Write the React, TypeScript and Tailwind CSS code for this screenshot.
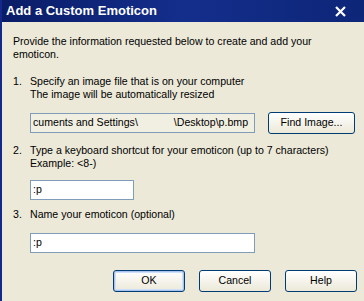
import React from "react";

function XpButton({ label, primary = false, wide = false }: { label: string; primary?: boolean; wide?: boolean }) {
  return (
    <div
      className={`flex h-[22px] items-center justify-center rounded-[3px] border border-[#003c74] bg-gradient-to-b from-[#ffffff] to-[#ece9d8] text-black ${
        wide ? "w-[87px]" : "w-[72px]"
      } ${primary ? "shadow-[inset_0_0_0_1px_#a8c4ee,inset_0_0_0_2px_#cfe0fa]" : ""}`}
    >
      {label}
    </div>
  );
}

function Step({ num, children }: { num: string; children: React.ReactNode }) {
  return (
    <div className="flex leading-[13px]">
      <span className="w-[17px] shrink-0">{num}</span>
      <div>{children}</div>
    </div>
  );
}

export default function App() {
  return (
    <div
      className="flex h-[301px] w-[364px] flex-col overflow-hidden border-l-2 border-[#13288a] bg-[#ece9d8] text-[10.6px] text-black"
      style={{ fontFamily: '"Liberation Sans", Arial, sans-serif' }}
    >
      {/* title bar */}
      <div className="-ml-[2px] flex h-[22px] shrink-0 items-center justify-between bg-gradient-to-r from-[#0a1c66] via-[#142e8c] to-[#0d2678] pl-[6px] pr-[18px]">
        <span className="text-[13px] font-bold text-white">Add a Custom Emoticon</span>
        <svg width="11" height="11" viewBox="0 0 11 11">
          <path d="M1 1 L10 10 M10 1 L1 10" stroke="#ffffff" strokeWidth="2.2" />
        </svg>
      </div>

      <div className="flex flex-col pl-[11px] pr-[7px] pt-[13px]">
        <p className="leading-[13px]">
          Provide the information requested below to create and add your
          <br />
          emoticon.
        </p>

        <div className="mt-[14px]">
          <Step num="1.">
            Specify an image file that is on your computer
            <br />
            The image will be automatically resized
          </Step>
        </div>

        <div className="ml-[17px] mt-[11px] flex items-center gap-[13px]">
          <div className="flex h-[20px] w-[225px] items-center overflow-hidden whitespace-nowrap border border-[#7f9db9] bg-[#f1efe2] pl-[2px]">
            <span>cuments and Settings\</span>
            <span className="w-[36px] shrink-0" />
            <span>\Desktop\p.bmp</span>
          </div>
          <XpButton label="Find Image..." wide />
        </div>

        <div className="mt-[10px]">
          <Step num="2.">
            Type a keyboard shortcut for your emoticon (up to 7 characters)
            <br />
            Example: &lt;8-)
          </Step>
        </div>

        <div className="ml-[17px] mt-[10px] flex h-[20px] w-[104px] items-center border border-[#7f9db9] bg-white pl-[2px]">
          :p
        </div>

        <div className="mt-[8px]">
          <Step num="3.">Name your emoticon (optional)</Step>
        </div>

        <div className="ml-[17px] mt-[12px] flex h-[20px] w-[225px] items-center border border-[#7f9db9] bg-white pl-[2px]">
          :p
        </div>

        <div className="mt-[17px] flex justify-end gap-[14px]">
          <XpButton label="OK" primary />
          <XpButton label="Cancel" />
          <XpButton label="Help" />
        </div>
      </div>
    </div>
  );
}
